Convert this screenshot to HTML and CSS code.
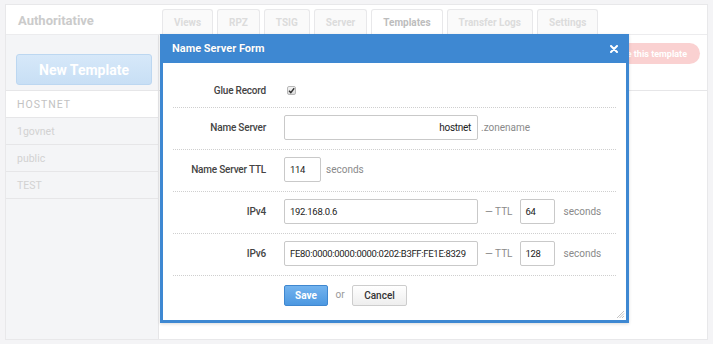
FILE: index.html
```html
<!DOCTYPE html>
<html>
<head>
<meta charset="utf-8">
<link rel="stylesheet" href="styles.css">
</head>
<body>
<div class="panel">
  <div class="panel-head">
    <div class="app-title">Authoritative</div>
    <div class="tabs">
      <div class="tab">Views</div>
      <div class="tab">RPZ</div>
      <div class="tab">TSIG</div>
      <div class="tab">Server</div>
      <div class="tab active">Templates</div>
      <div class="tab">Transfer Logs</div>
      <div class="tab">Settings</div>
    </div>
  </div>
  <div class="panel-body">
    <div class="sidebar">
      <div class="new-wrap"><div class="btn-new">New Template</div></div>
      <div class="list">
        <div class="item selected">HOSTNET</div>
        <div class="item">1govnet</div>
        <div class="item">public</div>
        <div class="item">TEST</div>
      </div>
    </div>
    <div class="content">
      <div class="content-head">
        <div class="btn-delete">Delete this template</div>
      </div>
    </div>
  </div>
</div>

<div class="modal">
  <div class="modal-head">
    <span class="modal-title">Name Server Form</span>
    <svg class="close" width="8" height="8" viewBox="0 0 8 8"><path d="M1 1L7 7M7 1L1 7" stroke="#fff" stroke-width="2" stroke-linecap="round"/></svg>
  </div>
  <div class="modal-body">
    <div class="row glue">
      <div class="label">Glue Record</div>
      <div class="field">
        <span class="check"><svg width="7" height="7" viewBox="0 0 7 7"><path d="M1 3.8L2.8 5.6L6.2 1.2" stroke="#333" stroke-width="1.4" fill="none"/></svg></span>
      </div>
    </div>
    <div class="row">
      <div class="label">Name Server</div>
      <div class="field">
        <div class="input wide right">hostnet</div>
        <span class="note zone">.zonename</span>
      </div>
    </div>
    <div class="row">
      <div class="label">Name Server TTL</div>
      <div class="field">
        <div class="input ttl">114</div>
        <span class="note sec">seconds</span>
      </div>
    </div>
    <div class="row">
      <div class="label">IPv4</div>
      <div class="field">
        <div class="input wide">192.168.0.6</div>
        <span class="note dash">— TTL</span>
        <div class="input ttl2">64</div>
        <span class="note sec2">seconds</span>
      </div>
    </div>
    <div class="row">
      <div class="label">IPv6</div>
      <div class="field">
        <div class="input wide">FE80:0000:0000:0000:0202:B3FF:FE1E:8329</div>
        <span class="note dash">— TTL</span>
        <div class="input ttl2">128</div>
        <span class="note sec2">seconds</span>
      </div>
    </div>
    <div class="actions">
      <div class="btn-save">Save</div>
      <span class="or">or</span>
      <div class="btn-cancel">Cancel</div>
    </div>
    <svg class="grip" width="9" height="9" viewBox="0 0 9 9"><path d="M8 1L1 8M8 3.5L3.5 8M8 6L6 8" stroke="#c4c4c4" stroke-width="1"/></svg>
  </div>
</div>
</body>
</html>
```

FILE: styles.css
```css
* { box-sizing: border-box; }
html, body { margin: 0; padding: 0; }
body {
  background: #f4f4f6;
  font-family: Roboto, "Liberation Sans", Arial, sans-serif;
  font-size: 10px;
  width: 713px;
  height: 344px;
  overflow: hidden;
  padding: 4px 5px 0 5px;
}
.panel {
  width: 703px;
  height: 336px;
  background: #fff;
  border: 1px solid #e8e8ea;
  display: flex;
  flex-direction: column;
}
.panel-head {
  height: 30px;
  border-bottom: 1px solid #ececee;
  display: flex;
  align-items: flex-end;
  background: #fff;
}
.app-title {
  width: 156px;
  align-self: center;
  padding-left: 12px;
  font-size: 13px;
  font-weight: bold;
  color: #cbcbcb;
  padding-top: 2px;
}
.tabs {
  display: flex;
  gap: 4px;
  margin-bottom: -1px;
}
.tab {
  height: 26px;
  padding: 0 11px;
  border: 1px solid #e8e8ea;
  border-bottom: none;
  border-radius: 3px 3px 0 0;
  display: flex;
  align-items: center;
  font-size: 10px;
  font-weight: bold;
  color: #dcdcdc;
  background: #fafafa;
}
.tab.active { background: #fff; color: #bdbdbd; }
.panel-body {
  flex: 1;
  display: flex;
}
.sidebar {
  width: 153px;
  background: #f4f5f7;
  border-right: 1px solid #e6e6e8;
}
.new-wrap { padding: 19px 6px 5px 10px; }
.btn-new {
  height: 31px;
  border: 1px solid #bcd7f1;
  border-radius: 3px;
  background: linear-gradient(#d6e8f9, #c8dff5);
  color: #fff;
  font-size: 14px;
  font-weight: bold;
  display: flex;
  align-items: center;
  justify-content: center;
}
.list { border-top: 1px solid #e6e6e8; }
.item {
  height: 27px;
  border-bottom: 1px solid #e6e6e8;
  display: flex;
  align-items: center;
  padding-left: 11px;
  font-size: 10.5px;
  color: #d2d2d2;
}
.item.selected {
  background: #fff;
  color: #c2c2c2;
  letter-spacing: 1px;
}
.content { flex: 1; }
.content-head {
  height: 56px;
  border-bottom: 1px solid #e6e6e8;
  display: flex;
  justify-content: flex-end;
  padding: 8px 7px 0 0;
}
.btn-delete {
  height: 21px;
  padding: 0 13px 0 20px;
  border-radius: 11px;
  background: #fad1d1;
  color: #fff;
  font-size: 9px;
  font-weight: bold;
  display: flex;
  align-items: center;
}

.modal {
  position: absolute;
  left: 160px;
  top: 34px;
  width: 469px;
  height: 289px;
  background: #fff;
  border: 3px solid #3e88d2;
  border-top: none;
  box-shadow: 0 1px 3px rgba(0,0,0,0.15);
  display: flex;
  flex-direction: column;
}
.modal-head {
  height: 29px;
  margin: 0 -3px;
  background: #3e88d2;
  display: flex;
  align-items: center;
  justify-content: space-between;
  padding: 0 11px 0 12px;
}
.modal-title {
  color: #fff;
  font-size: 11px;
  font-weight: bold;
  text-shadow: 0 0 1px rgba(0,0,0,0.2);
}
.close { margin-top: 1px; }
.modal-body {
  flex: 1;
  padding: 0 10px;
  position: relative;
  color: #333;
}
.row {
  display: flex;
  align-items: center;
  border-bottom: 1px dotted #cfcfcf;
  padding: 7px 0 9px;
}
.row.glue { padding: 18px 0 8px; height: 45px; }
.label {
  width: 93px;
  text-align: right;
  font-weight: 500;
  color: #444;
  letter-spacing: -0.2px;
}
.field {
  margin-left: 18px;
  display: flex;
  align-items: center;
}
.check {
  width: 9px;
  height: 9px;
  margin-left: 3px;
  border: 1px solid #b8b8b8;
  border-radius: 2px;
  background: linear-gradient(#f4f4f4, #dcdcdc);
  display: flex;
  align-items: center;
  justify-content: center;
}
.input {
  height: 25px;
  border: 1px solid #c9c9c9;
  border-radius: 2px;
  background: #fff;
  display: flex;
  align-items: center;
  padding: 0 5px;
  color: #222;
  font-size: 9.5px;
  letter-spacing: -0.3px;
  white-space: nowrap;
  overflow: hidden;
}
.input.wide { width: 194px; }
.input.right { justify-content: flex-end; padding-right: 6px; font-size: 10px; }
.input.ttl { width: 37px; }
.input.ttl2 { width: 35px; }
.note { color: #8a8a8a; font-size: 10px; }
.zone { margin-left: 3px; }
.sec { margin-left: 5px; }
.dash { margin: 0 7px; }
.sec2 { margin-left: 9px; }
.actions {
  display: flex;
  align-items: center;
  padding-top: 9px;
  padding-left: 111px;
}
.btn-save {
  width: 44px;
  height: 21px;
  border: 1px solid #3f87cf;
  border-radius: 2px;
  background: linear-gradient(#73b3ee, #4c98e1);
  color: #fff;
  font-weight: bold;
  font-size: 10px;
  display: flex;
  align-items: center;
  justify-content: center;
}
.or { color: #999; margin: -3px 0 0 0; width: 24px; text-align: center; }
.btn-cancel {
  width: 55px;
  height: 21px;
  border: 1px solid #cdcdcd;
  border-radius: 2px;
  background: linear-gradient(#ffffff, #eeeeee);
  color: #333;
  font-weight: 500;
  font-size: 10px;
  display: flex;
  align-items: center;
  justify-content: center;
}
.grip {
  position: absolute;
  right: 1px;
  bottom: 1px;
}
```
